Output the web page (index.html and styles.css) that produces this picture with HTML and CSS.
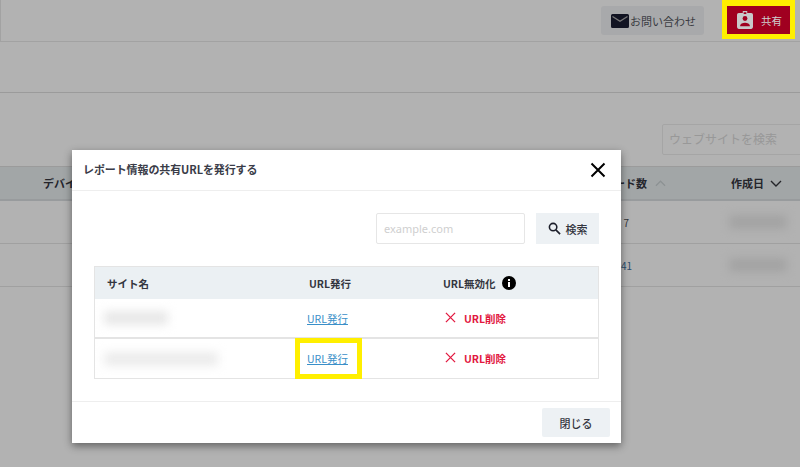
FILE: index.html
```html
<!DOCTYPE html>
<html lang="ja">
<head>
<meta charset="utf-8">
<title>共有URL</title>
<link rel="stylesheet" href="styles.css">
</head>
<body>
<div class="page">
  <header class="topbar">
    <div class="contact">
      <svg class="mail" viewBox="0 0 18 14" width="18" height="14"><path fill="#1b1d33" d="M1.5 0h15A1.5 1.5 0 0 1 18 1.500v11a1.500 1.500 0 0 1-1.500 1.500h-15A1.500 1.500 0 0 1 0 12.500v-11A1.500 1.500 0 0 1 1.500 0z"/><path fill="none" stroke="#b0b0b0" stroke-width="1.300" d="M1.500 2.500 9 7.300l7.500-4.800"/></svg>
      <span>お問い合わせ</span>
    </div>
    <div class="share-slot"></div>
  </header>
  <div class="subbar"></div>
  <div class="toolbar"><div class="site-search">ウェブサイトを検索</div></div>
  <div class="bg-table">
    <div class="bg-head">
      <span class="col-device">デバイス</span>
      <span class="col-count">キーワード数
        <svg class="chev up" viewBox="0 0 12 7" width="11" height="7"><path d="M1 6l5-5 5 5" fill="none" stroke="#c9d1d3" stroke-width="1.400"/></svg>
      </span>
      <span class="col-date">作成日
        <svg class="chev" viewBox="0 0 12 7" width="12" height="7"><path d="M1 1l5 5 5-5" fill="none" stroke="#34363c" stroke-width="1.400"/></svg>
      </span>
    </div>
    <div class="bg-row"><span class="col-device"></span><span class="col-count num one">7</span><span class="col-date"><i class="smudge"></i></span></div>
    <div class="bg-row"><span class="col-device"></span><span class="col-count num link">141</span><span class="col-date"><i class="smudge"></i></span></div>
  </div>
</div>

<div class="overlay"></div>

<div class="share-wrap">
  <button class="share">
    <svg viewBox="0 0 18 20" width="16" height="18"><path fill="#c9c9c9" d="M2 2h4.500V0h5v2H16a2 2 0 0 1 2 2v14a2 2 0 0 1-2 2H2a2 2 0 0 1-2-2V4a2 2 0 0 1 2-2z"/><circle cx="9" cy="8.300" r="2.700" fill="#a00020"/><path fill="#a00020" d="M3.500 16.500c0-2.300 2.800-3.500 5.500-3.500s5.500 1.200 5.500 3.500v.5h-11z"/><rect x="7.500" y="1.300" width="3" height="2" fill="#a00020"/></svg>
    <span>共有</span>
  </button>
</div>

<section class="modal">
  <div class="modal-head">
    <h2>レポート情報の共有URLを発行する</h2>
    <svg class="close" viewBox="0 0 16 16" width="16" height="16"><path d="M1.500 1.500l13 13M14.500 1.500l-13 13" stroke="#000" stroke-width="2" fill="none"/></svg>
  </div>
  <div class="modal-body">
    <div class="search-row">
      <div class="search-input">example.com</div>
      <button class="search-btn">
        <svg viewBox="0 0 14 14" width="13" height="13"><circle cx="5.500" cy="5.500" r="4" fill="none" stroke="#1d1f2b" stroke-width="1.700"/><path d="M8.500 8.500l4.500 4.500" stroke="#1d1f2b" stroke-width="1.800"/></svg>
        <span>検索</span>
      </button>
    </div>
    <div class="url-table">
      <div class="url-row url-head">
        <div class="cell-name">サイト名</div>
        <div class="cell-issue">URL発行</div>
        <div class="cell-revoke">URL無効化
          <svg class="info" viewBox="0 0 14 14" width="14" height="14"><circle cx="7" cy="7" r="7" fill="#000"/><rect x="6" y="6" width="2" height="5" fill="#fff"/><rect x="6" y="3" width="2" height="2" fill="#fff"/></svg>
        </div>
      </div>
      <div class="url-row">
        <div class="cell-name"><i class="smudge short"></i></div>
        <div class="cell-issue"><a href="#">URL発行</a></div>
        <div class="cell-revoke del">
          <svg viewBox="0 0 12 12" width="11" height="11"><path d="M1 1l10 10M11 1L1 11" stroke="#e2183f" stroke-width="1.400" fill="none"/></svg>
          <span>URL削除</span>
        </div>
      </div>
      <div class="url-row">
        <div class="cell-name"><i class="smudge long"></i></div>
        <div class="cell-issue"><a href="#">URL発行</a></div>
        <div class="cell-revoke del">
          <svg viewBox="0 0 12 12" width="11" height="11"><path d="M1 1l10 10M11 1L1 11" stroke="#e2183f" stroke-width="1.400" fill="none"/></svg>
          <span>URL削除</span>
        </div>
      </div>
    </div>
  </div>
  <div class="modal-foot"><button class="close-btn">閉じる</button></div>
  <div class="highlight"></div>
</section>
</body>
</html>
```

FILE: styles.css
```css
* { box-sizing: border-box; }
html, body { margin: 0; height: 100%; }
body {
  position: relative;
  width: 800px;
  height: 467px;
  overflow: hidden;
  background: #fff;
  font-family: "Noto Sans CJK JP", "Noto Sans", sans-serif;
  color: #34363f;
  font-size: 11px;
}
button { font-family: inherit; border: 0; padding: 0; }

.page { width: 800px; }
.topbar {
  height: 42px;
  display: flex;
  justify-content: flex-end;
  align-items: flex-start;
  padding-top: 6px;
  border-bottom: 1px solid #e8e8e8;
  border-left: 1px solid #e8e8e8;
}
.contact {
  width: 103px;
  height: 29px;
  background: #f1f3f5;
  border-radius: 3px;
  display: flex;
  align-items: center;
  gap: 1px;
  padding-left: 10px;
  font-size: 11px;
  color: #55575f;
}
.share-slot { width: 96px; }
.subbar { height: 51px; border-bottom: 1px solid #dedede; }
.toolbar { height: 73px; padding: 31px 0 0 662px; }
.site-search {
  width: 150px;
  height: 31px;
  border: 1px solid #ededed;
  border-radius: 2px;
  padding-left: 6px;
  line-height: 28px;
  font-size: 12px;
  color: #dadada;
}
.bg-head, .bg-row {
  display: grid;
  grid-template-columns: 43px 1fr 69px;
  align-items: center;
}
.bg-head {
  height: 35px;
  background: #e9eef0;
  border-top: 1px solid #dedede;
  border-bottom: 2px solid #dadfe1;
  font-weight: 700;
  color: #34363f;
}
.bg-row { height: 43px; border-bottom: 1px solid #e6e6e6; font-size: 10px; }
.col-device { grid-column: 2; grid-row: 1; }
.col-count {
  grid-column: 2;
  grid-row: 1;
  justify-self: end;
  padding-right: 65px;
  display: flex;
  align-items: center;
  gap: 8px;
  white-space: nowrap;
}
.bg-row .col-count { padding-right: 99px; color: #4a4c52; }
.bg-row .col-count.one { padding-right: 102px; }
.bg-row .col-count.link { color: #3d6f9c; }
.col-date { grid-column: 3; grid-row: 1; display: flex; align-items: center; gap: 6px; }
.smudge {
  display: block;
  width: 58px;
  height: 14px;
  margin-left: -2px;
  background: #eaeaea;
  filter: blur(5px);
}

.overlay {
  position: absolute;
  inset: 0;
  background: rgba(0, 0, 0, .3);
}

.share-wrap {
  position: absolute;
  left: 722px;
  top: 0;
  width: 73px;
  height: 39px;
  background: #ffef00;
  padding: 6px 5px 5px;
}
.share {
  width: 63px;
  height: 28px;
  background: #a00020;
  color: #cfcfcf;
  display: flex;
  align-items: center;
  gap: 8px;
  padding-left: 10px;
  font-size: 10.500px;
}

.modal {
  position: absolute;
  left: 72px;
  top: 150px;
  width: 549px;
  height: 293px;
  background: #fff;
  box-shadow: 0 3px 8px rgba(0, 0, 0, .45);
  display: flex;
  flex-direction: column;
}
.modal-head {
  height: 41px;
  flex: none;
  display: flex;
  align-items: center;
  justify-content: space-between;
  padding: 0 15px 0 11px;
  border-bottom: 1px solid #eee;
}
.modal-head h2 { margin: 0 0 2px; font-size: 11px; font-weight: 700; color: #3a3c48; letter-spacing: -.1px; }
.modal-body { flex: 1; padding: 22px 22px 0; }
.search-row { display: flex; justify-content: flex-end; gap: 11px; height: 31px; margin-bottom: 22px; }
.search-input {
  width: 149px;
  border: 1px solid #e6e6e6;
  border-radius: 2px;
  padding-left: 7px;
  line-height: 30px;
  font-size: 11px;
  color: #cfcfcf;
  font-family: "Noto Sans", sans-serif;
}
.search-btn {
  width: 63px;
  background: #edf1f4;
  display: flex;
  align-items: center;
  justify-content: center;
  gap: 5px;
  font-size: 11px;
  font-weight: 500;
  color: #34363f;
}
.url-table { border: 1px solid #e4e4e4; width: 505px; }
.url-row {
  display: grid;
  grid-template-columns: 182px 106px 1fr;
  height: 40px;
  align-items: center;
  border-bottom: 2px solid #e4e4e4;
  font-size: 10.500px;
}
.url-row:last-child { border-bottom: 0; height: 39px; }
.url-head {
  height: 32px;
  background: #ebf0f3;
  border-bottom: 0;
  font-weight: 700;
  color: #34363f;
}
.cell-name { padding-left: 12px; }
.cell-issue { text-align: center; }
.url-head .cell-revoke { display: flex; align-items: center; gap: 6px; padding-left: 60px; }
a { color: #3a8fc8; margin-right: 5px; }
.del { display: flex; align-items: center; gap: 8px; padding-left: 62px; color: #e2183f; font-weight: 700; }
.del svg { margin-top: -2px; }
.smudge.short { width: 64px; background: #e8e8e8; margin-left: -3px; }
.smudge.long { width: 114px; background: #ececec; margin-left: -3px; }
.modal-foot {
  height: 42px;
  flex: none;
  display: flex;
  justify-content: flex-end;
  padding: 6px 11px 0 0;
  border-top: 1px solid #eee;
}
.close-btn {
  width: 68px;
  height: 29px;
  background: #edf1f4;
  border-radius: 2px;
  font-size: 11px;
  font-weight: 500;
  color: #34363f;
}
.highlight {
  position: absolute;
  left: 223px;
  top: 188px;
  width: 67px;
  height: 41px;
  border: 5px solid #ffef00;
}
```
